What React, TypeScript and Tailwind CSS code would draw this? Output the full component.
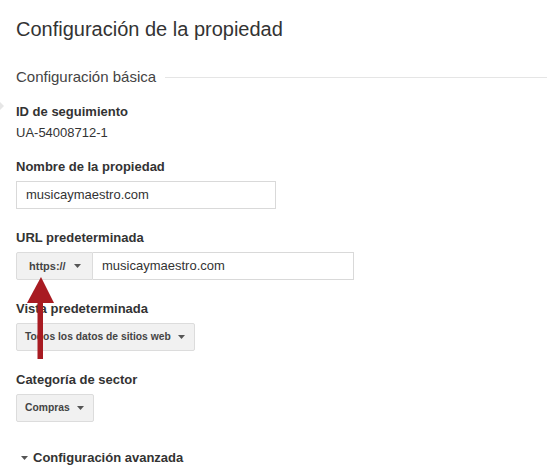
import { FunctionComponent, ReactNode } from 'react'

const Caret: FunctionComponent<{ className?: string }> = ({ className = 'ml-[7px]' }) => (
  <svg className={`h-[4px] w-[7px] flex-shrink-0 ${className}`} viewBox="0 0 7 4">
    <path d="M0 0h7L3.5 4z" fill="#555" />
  </svg>
)

const Field: FunctionComponent<{ label: string; children: ReactNode; className?: string }> = ({
  label,
  children,
  className = '',
}) => (
  <div className={className}>
    <div className="text-[13px] font-bold leading-[16px] text-[#333]">{label}</div>
    <div className="mt-[6px]">{children}</div>
  </div>
)

const Button: FunctionComponent<{ text: string }> = ({ text }) => (
  <div className="inline-flex h-[28px] items-center rounded-[2px] border border-[#dcdcdc] bg-[#f1f1f1] pl-[8px] pr-[9px] text-[10.3px] font-bold text-[#444]">
    <span>{text}</span>
    <Caret />
  </div>
)

const App: FunctionComponent = () => {
  return (
    <main
      className="relative h-[468px] w-[547px] overflow-hidden bg-white pl-4"
      style={{ fontFamily: '"Liberation Sans", Arial, sans-serif' }}
    >
      <h1 className="pt-[16px] text-[20px] leading-[26px] text-[#333]">Configuración de la propiedad</h1>

      <div className="mt-[26px] flex items-center">
        <span className="text-[15px] leading-[18px] text-[#444]">Configuración básica</span>
        <div className="ml-[9px] h-px flex-1 bg-[#e5e5e5]" />
      </div>

      {/* small marker at the left edge */}
      <svg className="absolute left-0 top-[102px] h-[8px] w-[4px]" viewBox="0 0 4 8">
        <path d="M0 0l4 4-4 4z" fill="#e6e6e6" />
      </svg>

      <div className="mt-[18px]">
        <div className="text-[13px] font-bold leading-[16px] text-[#333]">ID de seguimiento</div>
        <div className="mt-[5px] text-[13px] leading-[16px] text-[#333]">UA-54008712-1</div>
      </div>

      <Field label="Nombre de la propiedad" className="mt-[18px]">
        <div className="flex h-[28px] w-[260px] items-center border border-[#d9d9d9] px-[9px] text-[13px] text-[#333]">
          musicaymaestro.com
        </div>
      </Field>

      <Field label="URL predeterminada" className="mt-[21px]">
        <div className="flex h-[28px]">
          <div className="flex w-[77px] items-center rounded-l-[2px] border border-[#dcdcdc] bg-[#f1f1f1] pl-[12px] text-[11px] font-bold text-[#444]">
            <span>https://</span>
            <Caret className="ml-[8px]" />
          </div>
          <div className="flex w-[261px] items-center border border-l-0 border-[#d9d9d9] px-[9px] text-[13px] text-[#333]">
            musicaymaestro.com
          </div>
        </div>
      </Field>

      <Field label="Vista predeterminada" className="mt-[21px]">
        <Button text="Todos los datos de sitios web" />
      </Field>

      <Field label="Categoría de sector" className="mt-[21px]">
        <Button text="Compras" />
      </Field>

      <div className="mt-[28px] flex items-center pl-[5px] leading-[16px]">
        <Caret className="" />
        <span className="ml-[5px] text-[13px] font-bold text-[#333]">Configuración avanzada</span>
      </div>

      {/* red annotation arrow */}
      <svg className="absolute left-[26px] top-[277px] h-[82px] w-[30px]" viewBox="0 0 30 82">
        <path d="M15 0L28 26H1z" fill="#a81b22" />
        <rect x="11.5" y="24" width="5.5" height="58" fill="#a81b22" />
      </svg>
    </main>
  )
}

export default App
